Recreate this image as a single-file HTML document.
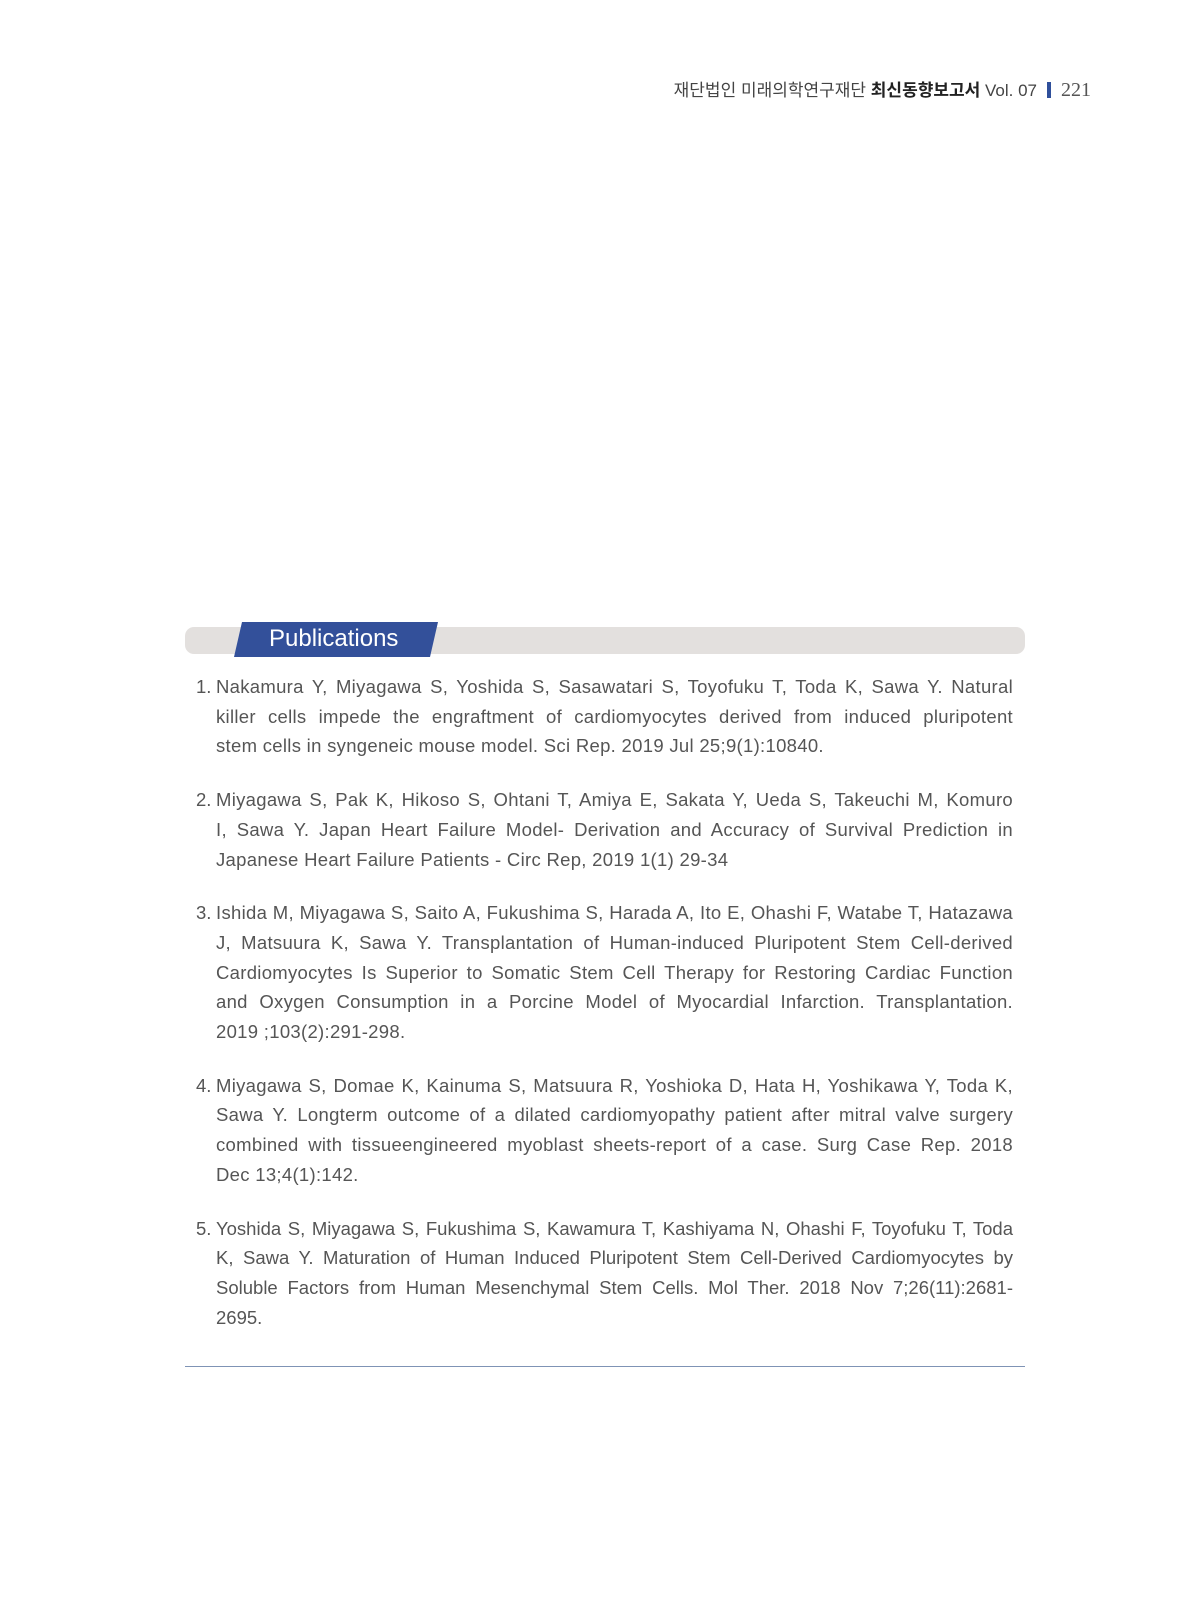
<!DOCTYPE html>
<html><head><meta charset="utf-8"><style>
body{margin:0;width:1200px;height:1600px;background:#fff;position:relative;font-family:"Liberation Sans","Noto Sans CJK KR",sans-serif;}
.hdr{position:absolute;top:76px;right:109px;font-size:17px;color:#444;white-space:nowrap;}
.hdr b{color:#222}
.hdr .bar{display:inline-block;width:4px;height:16px;background:#2f4f9b;margin:0 10px 0 10px;vertical-align:-2px}
.hdr .pg{font-family:"Liberation Serif",serif;font-size:20px;color:#555}
.gray{position:absolute;left:185px;top:627px;width:840px;height:27px;background:#e3e0de;border-radius:9px}
.blue{position:absolute;left:234px;top:622px;width:204px;height:35px;background:#33509a;clip-path:polygon(8px 0,100% 0,196px 100%,0 100%)}
.blue span{position:absolute;left:35px;top:3px;color:#fff;font-size:24px}
ol{position:absolute;left:196px;top:672px;width:817px;margin:0;padding:0;list-style:none;font-size:18.5px;color:#555;line-height:29.7px;letter-spacing:.3px}
li{display:flex;margin-bottom:24px}
li .n{width:20px;flex:none;letter-spacing:0}
li .t{flex:1;min-width:0;white-space:nowrap}
li .t span{display:block;text-align:justify;text-align-last:justify}
li .t span.l{text-align-last:left}
li.s{letter-spacing:0}
.rule{position:absolute;left:185px;top:1366px;width:840px;height:1px;background:#7f93b5}
</style></head><body>
<div class="hdr">재단법인 미래의학연구재단 <b>최신동향보고서</b> Vol. 07<span class="bar"></span><span class="pg">221</span></div>
<div class="gray"></div>
<div class="blue"><span>Publications</span></div>
<ol>
<li><span class="n">1.</span><span class="t"><span>Nakamura Y, Miyagawa S, Yoshida S, Sasawatari S, Toyofuku T, Toda K, Sawa Y. Natural</span><span>killer cells impede the engraftment of cardiomyocytes derived from induced pluripotent</span><span class="l">stem cells in syngeneic mouse model. Sci Rep. 2019 Jul 25;9(1):10840.</span></span></li>
<li><span class="n">2.</span><span class="t"><span>Miyagawa S, Pak K, Hikoso S, Ohtani T, Amiya E, Sakata Y, Ueda S, Takeuchi M, Komuro</span><span>I, Sawa Y. Japan Heart Failure Model- Derivation and Accuracy of Survival Prediction in</span><span class="l">Japanese Heart Failure Patients - Circ Rep, 2019 1(1) 29-34</span></span></li>
<li><span class="n">3.</span><span class="t"><span>Ishida M, Miyagawa S, Saito A, Fukushima S, Harada A, Ito E, Ohashi F, Watabe T, Hatazawa</span><span>J, Matsuura K, Sawa Y. Transplantation of Human-induced Pluripotent Stem Cell-derived</span><span>Cardiomyocytes Is Superior to Somatic Stem Cell Therapy for Restoring Cardiac Function</span><span>and Oxygen Consumption in a Porcine Model of Myocardial Infarction. Transplantation.</span><span class="l">2019 ;103(2):291-298.</span></span></li>
<li><span class="n">4.</span><span class="t"><span>Miyagawa S, Domae K, Kainuma S, Matsuura R, Yoshioka D, Hata H, Yoshikawa Y, Toda K,</span><span>Sawa Y. Longterm outcome of a dilated cardiomyopathy patient after mitral valve surgery</span><span>combined with tissueengineered myoblast sheets-report of a case. Surg Case Rep. 2018</span><span class="l">Dec 13;4(1):142.</span></span></li>
<li class="s"><span class="n">5.</span><span class="t"><span>Yoshida S, Miyagawa S, Fukushima S, Kawamura T, Kashiyama N, Ohashi F, Toyofuku T, Toda</span><span>K, Sawa Y. Maturation of Human Induced Pluripotent Stem Cell-Derived Cardiomyocytes by</span><span>Soluble Factors from Human Mesenchymal Stem Cells. Mol Ther. 2018 Nov 7;26(11):2681-</span><span class="l">2695.</span></span></li>
</ol>
<div class="rule"></div>
</body></html>
